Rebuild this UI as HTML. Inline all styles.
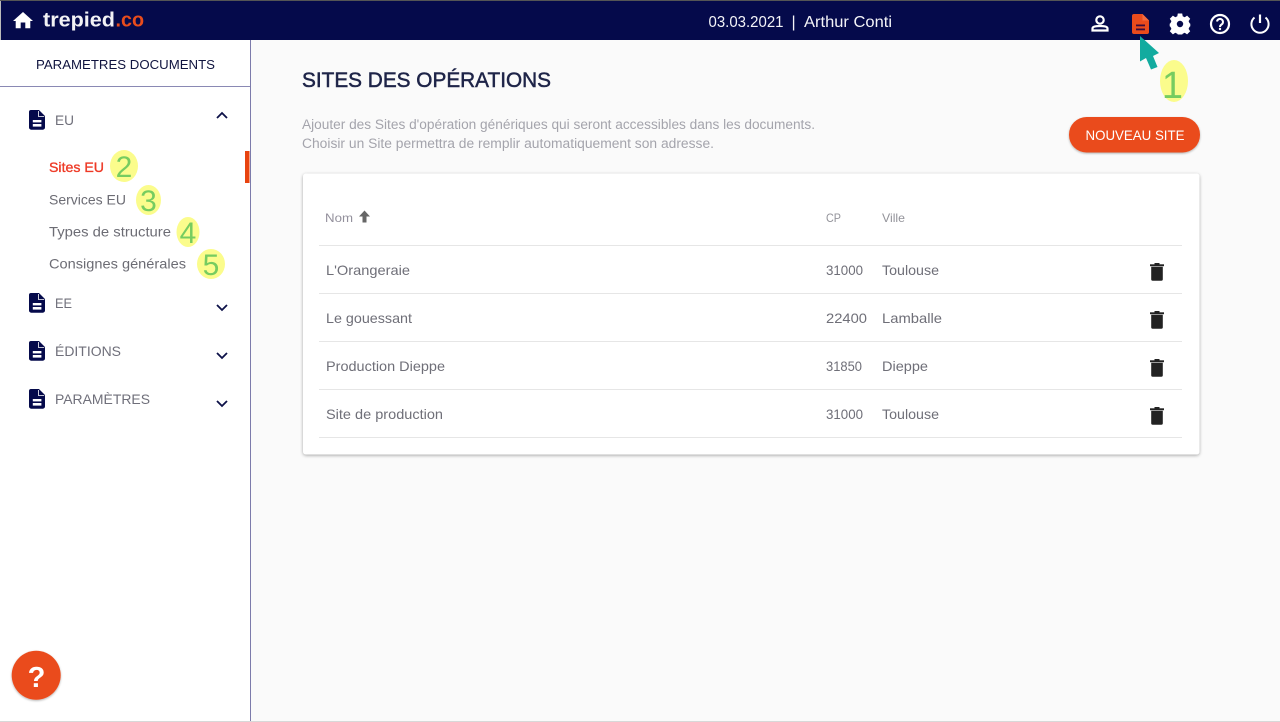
<!DOCTYPE html>
<html lang="fr"><head><meta charset="utf-8"><title>Sites des opérations</title>
<style>
html,body{margin:0;padding:0;width:1280px;height:722px;overflow:hidden;background:#fff}
svg{display:block}
text{font-family:"Liberation Sans",sans-serif}
</style></head><body>
<svg width="1280" height="722" viewBox="0 0 1280 722" xmlns="http://www.w3.org/2000/svg">
<defs>
<g id="docn">
<path d="M2 0H10L16 6V17.500A2.200 2.200 0 0 1 13.800 19.700H2.200A2.200 2.200 0 0 1 0 17.500V2A2 2 0 0 1 2 0Z" fill="#050a4b"/>
<path d="M10.200 0L16 5.800V0Z" fill="#fff"/>
<path d="M9.500 1V6.500H15.200" fill="none" stroke="#fff" stroke-width=".8"/>
<rect x="3.800" y="10" width="8.600" height="2.400" fill="#fff"/>
<rect x="3.800" y="14" width="8.600" height="2.600" fill="#fff"/>
</g>
<g id="trash" fill="#222"><rect x="-7" y="-7.700" width="14" height="1.900"/><rect x="-2.500" y="-9" width="5" height="1.600"/><path d="M-5.800 -5.200H5.800V7.200A1.500 1.500 0 0 1 4.300 8.700H-4.300A1.500 1.500 0 0 1 -5.800 7.200Z"/></g>
<filter id="sh" x="-5%" y="-5%" width="110%" height="115%"><feDropShadow dx="0" dy="1" stdDeviation="1.500" flood-color="#000" flood-opacity=".35"/></filter>
<filter id="sh2" x="-20%" y="-20%" width="140%" height="150%"><feDropShadow dx="0" dy="1" stdDeviation="1" flood-color="#000" flood-opacity=".3"/></filter>
</defs>

<rect width="1280" height="722" fill="#fff"/>
<rect x="251" y="40" width="1029" height="681" fill="#fafafa"/>
<rect x="0" y="721" width="1280" height="1" fill="#d8d8d8"/>
<rect x="250" y="40" width="1" height="681" fill="#7c7bab"/>

<!-- header -->
<rect x="0" y="0" width="1280" height="40" fill="#050a4b"/>
<rect x="0" y="0" width="1280" height="1" fill="#555"/>
<rect x="0" y="1" width="1" height="39" fill="#bbb"/>
<path d="M23 12L33 21H30.300V28.300H25.300V22.500H20.700V28.300H15.700V21H13Z" fill="#fff"/>
<text x="43" y="26.500" font-size="20" font-weight="700" fill="#f2f2f5" textLength="72" lengthAdjust="spacingAndGlyphs">trepied</text>
<text x="115.500" y="26.500" font-size="20" font-weight="700" fill="#e84c1c" textLength="28.500" lengthAdjust="spacingAndGlyphs">.co</text>
<g font-size="16" fill="#f4f4f8">
<text x="708.500" y="27" textLength="75" lengthAdjust="spacingAndGlyphs">03.03.2021</text>
<text x="791.500" y="27">|</text>
<text x="804" y="27" textLength="88" lengthAdjust="spacingAndGlyphs">Arthur Conti</text>
</g>

<!-- header icons -->
<g fill="none" stroke="#fff" stroke-width="2.200">
<circle cx="1100" cy="20" r="3.700"/>
<path d="M1092.500 30.500V28.500Q1092.500 26 1100 26Q1107.500 26 1107.500 28.500V30.500Z"/>
<circle cx="1220" cy="24" r="9"/>
<path d="M1217 21.500A3 3 0 1 1 1221.500 24.500Q1220 25.500 1220 27" stroke-width="2"/>
<path d="M1260 14.500V23" stroke-width="2.200"/>
<path d="M1254.500 17.500A8.600 8.600 0 1 0 1265.500 17.500" stroke-width="2"/>
</g>
<circle cx="1220" cy="29" r="1.200" fill="#fff"/>
<g transform="translate(1132 14)"><path d="M2 0H10.500L17 6.500V18A2 2 0 0 1 15 20H2A2 2 0 0 1 0 18V2A2 2 0 0 1 2 0Z" fill="#ea4b1c"/><path d="M10.500 0L17 6.500H10.500Z" fill="#f26b3f"/><rect x="4" y="10.500" width="9" height="1.800" fill="#3a0c3c"/><rect x="4" y="14.500" width="9" height="1.800" fill="#3a0c3c"/></g>
<path fill-rule="evenodd" fill="#fff" d="M1177.800 13.500H1182.200L1182.700 16.300L1184.700 17.200L1187.100 15.600L1190.200 18.700L1188.600 21.100L1189.500 23.100L1190.300 23.800V26.200L1189.500 26.900L1188.600 28.900L1190.200 31.300L1187.100 34.400L1184.700 32.800L1182.700 33.700L1182.200 34.500H1177.800L1177.300 33.700L1175.300 32.800L1172.900 34.400L1169.800 31.300L1171.400 28.900L1170.500 26.900L1169.700 26.200V23.800L1170.500 23.100L1171.400 21.100L1169.800 18.700L1172.900 15.600L1175.300 17.200L1177.300 16.300ZM1180 20.800A3.200 3.200 0 1 0 1180 27.200A3.200 3.200 0 1 0 1180 20.800Z"/>

<!-- sidebar -->
<text x="36" y="69" font-size="13" fill="#10143f" textLength="179" lengthAdjust="spacingAndGlyphs">PARAMETRES DOCUMENTS</text>
<rect x="0" y="86" width="250" height="1" fill="#8a89b4"/>

<use href="#docn" x="29" y="110"/>
<text x="55" y="125" font-size="14" fill="#6f6f7a" textLength="19" lengthAdjust="spacingAndGlyphs">EU</text>
<path d="M217 118L222 113L227 118" fill="none" stroke="#0d1148" stroke-width="1.800"/>

<text x="49" y="172" font-size="14" fill="#ee3a26" stroke="#ee3a26" stroke-width=".35" textLength="55" lengthAdjust="spacingAndGlyphs">Sites EU</text>
<text x="49" y="204.500" font-size="14" fill="#6c6c74" textLength="77" lengthAdjust="spacingAndGlyphs">Services EU</text>
<text x="49" y="236.500" font-size="14" fill="#6c6c74" textLength="122" lengthAdjust="spacingAndGlyphs">Types de structure</text>
<text x="49" y="268.500" font-size="14" fill="#6c6c74" textLength="137" lengthAdjust="spacingAndGlyphs">Consignes générales</text>
<rect x="245" y="151" width="4.500" height="32" fill="#e8430f"/>

<use href="#docn" x="29" y="293"/>
<text x="55" y="308" font-size="14" fill="#6f6f7a" textLength="17" lengthAdjust="spacingAndGlyphs">EE</text>
<path d="M217 305L222 310L227 305" fill="none" stroke="#0d1148" stroke-width="1.800"/>
<use href="#docn" x="29" y="341"/>
<text x="55" y="356" font-size="14" fill="#6f6f7a" textLength="66" lengthAdjust="spacingAndGlyphs">ÉDITIONS</text>
<path d="M217 353L222 358L227 353" fill="none" stroke="#0d1148" stroke-width="1.800"/>
<use href="#docn" x="29" y="389"/>
<text x="55" y="404" font-size="14" fill="#6f6f7a" textLength="95" lengthAdjust="spacingAndGlyphs">PARAMÈTRES</text>
<path d="M217 401L222 406L227 401" fill="none" stroke="#0d1148" stroke-width="1.800"/>

<!-- annotation numbers -->
<g fill="#fbfc8c">
<ellipse cx="1174" cy="81" rx="14" ry="21"/>
<ellipse cx="124" cy="166" rx="14" ry="16"/>
<ellipse cx="148.500" cy="200" rx="12.500" ry="15"/>
<ellipse cx="188" cy="232" rx="11.500" ry="15"/>
<ellipse cx="211" cy="264" rx="14" ry="15"/>
</g>
<g fill="#76cc60" font-size="30" text-anchor="middle">
<text x="1172.500" y="98" font-size="38">1</text>
<text x="124" y="177">2</text>
<text x="148.500" y="211">3</text>
<text x="188" y="243">4</text>
<text x="211" y="275">5</text>
</g>

<!-- cursor -->
<path d="M1140 36L1159 53L1153 56L1157.500 67L1151 69.500L1146 58L1140 61.500Z" fill="#12ab9f"/>

<!-- main -->
<text x="302" y="87" font-size="21" fill="#1e2448" stroke="#1e2448" stroke-width=".5" textLength="249" lengthAdjust="spacingAndGlyphs">SITES DES OPÉRATIONS</text>
<text x="302" y="129" font-size="13.500" fill="#a4a4ac" textLength="513" lengthAdjust="spacingAndGlyphs">Ajouter des Sites d'opération génériques qui seront accessibles dans les documents.</text>
<text x="302" y="148" font-size="13.500" fill="#a4a4ac" textLength="412" lengthAdjust="spacingAndGlyphs">Choisir un Site permettra de remplir automatiquement son adresse.</text>

<rect x="1069" y="117" width="131" height="35.500" rx="17.500" fill="#ea4c1b" filter="url(#sh2)"/>
<text x="1085.500" y="140" font-size="14" fill="#fff" textLength="99" lengthAdjust="spacingAndGlyphs">NOUVEAU SITE</text>

<!-- table card -->
<rect x="303" y="173.500" width="896.500" height="281" rx="3" fill="#fff" filter="url(#sh)"/>
<text x="325" y="222" font-size="12" fill="#93909c" textLength="28" lengthAdjust="spacingAndGlyphs">Nom</text>
<path d="M364.500 210.500L370 216.500H366.500V222.500H362.500V216.500H359Z" fill="#666"/>
<text x="826" y="222" font-size="12" fill="#93939a" textLength="15" lengthAdjust="spacingAndGlyphs">CP</text>
<text x="882" y="222" font-size="12" fill="#93939a" textLength="23" lengthAdjust="spacingAndGlyphs">Ville</text>
<g fill="#e6e6e6">
<rect x="319" y="245" width="863" height="1"/>
<rect x="319" y="293" width="863" height="1"/>
<rect x="319" y="341" width="863" height="1"/>
<rect x="319" y="389" width="863" height="1"/>
<rect x="319" y="437" width="863" height="1"/>
</g>
<g font-size="14" fill="#6f6f78">
<text x="326" y="275" textLength="84" lengthAdjust="spacingAndGlyphs">L'Orangeraie</text>
<text x="826" y="275" textLength="37" lengthAdjust="spacingAndGlyphs">31000</text>
<text x="882" y="275" textLength="57" lengthAdjust="spacingAndGlyphs">Toulouse</text>
<text x="326" y="323" textLength="86" lengthAdjust="spacingAndGlyphs">Le gouessant</text>
<text x="826" y="323" textLength="41" lengthAdjust="spacingAndGlyphs">22400</text>
<text x="882" y="323" textLength="60" lengthAdjust="spacingAndGlyphs">Lamballe</text>
<text x="326" y="371" textLength="119" lengthAdjust="spacingAndGlyphs">Production Dieppe</text>
<text x="826" y="371" textLength="36" lengthAdjust="spacingAndGlyphs">31850</text>
<text x="882" y="371" textLength="46" lengthAdjust="spacingAndGlyphs">Dieppe</text>
<text x="326" y="419" textLength="117" lengthAdjust="spacingAndGlyphs">Site de production</text>
<text x="826" y="419" textLength="37" lengthAdjust="spacingAndGlyphs">31000</text>
<text x="882" y="419" textLength="57" lengthAdjust="spacingAndGlyphs">Toulouse</text>
</g>
<use href="#trash" x="1157" y="272"/>
<use href="#trash" x="1157" y="320"/>
<use href="#trash" x="1157" y="368"/>
<use href="#trash" x="1157" y="416"/>

<!-- help -->
<circle cx="36.200" cy="675.300" r="24.500" fill="#ea4c1b" filter="url(#sh2)"/>
<text x="36.500" y="687" font-size="29" font-weight="700" fill="#fff" text-anchor="middle">?</text>
</svg>
</body></html>
